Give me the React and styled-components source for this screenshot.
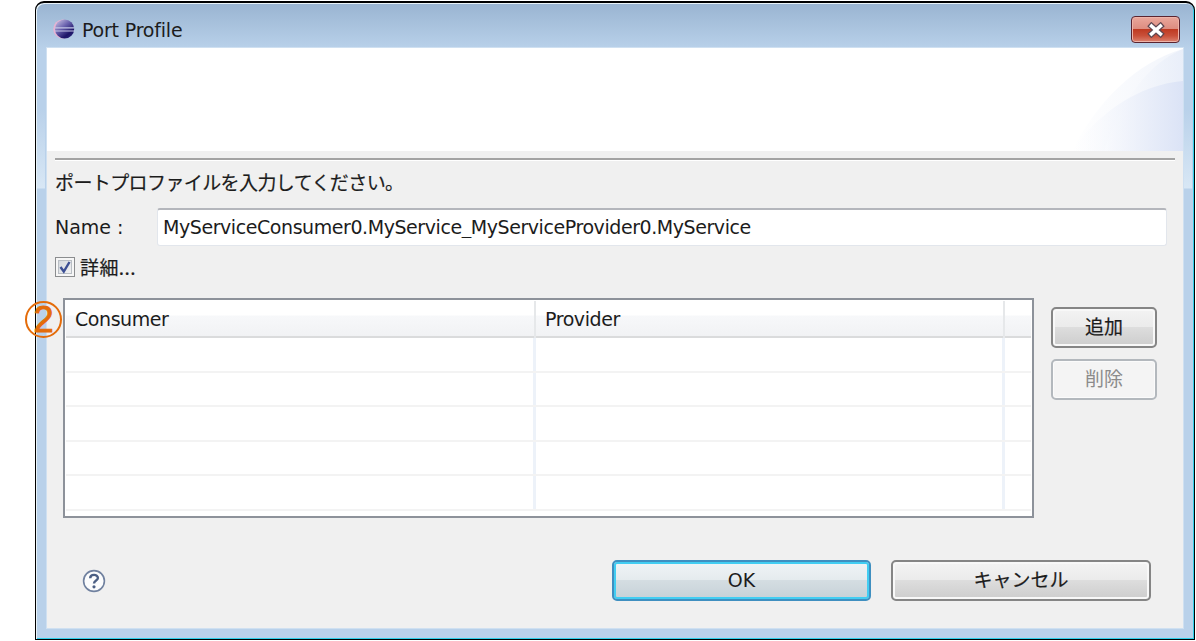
import React from "react";
import styled, { createGlobalStyle } from "styled-components";

const Global = createGlobalStyle`
  * { box-sizing: border-box; }
  html, body { margin: 0; background: #fff; overflow: hidden; }
  body {
    font-family: "DejaVu Sans", "Noto Sans CJK JP", sans-serif;
    font-size: 19px;
    letter-spacing: -0.43px;
    color: #1c1c1c;
  }
`;

const Screen = styled.main`
  position: relative;
  width: 1196px;
  height: 641px;
  padding: 1px 1px 1px 35px;
`;

const Window = styled.section`
  width: 1160px;
  height: 639px;
  padding: 0 11px 11px 11px;
  display: flex;
  flex-direction: column;
  border: 1px solid #000;
  border-top-width: 2px;
  border-radius: 9px 9px 0 0;
  box-shadow: inset 1px 1px 0 #e9f3f8, inset -1px -1px 0 #2fd0ea;
  background:
    linear-gradient(180deg, #b9d1ea 0, #b9d1ea 60px, #d8e7f5 139px, #b9d1ea 140px) 1px 46px / 8px 150px no-repeat,
    linear-gradient(180deg, #b9d1ea 0, #b9d1ea 60px, #d8e7f5 139px, #b9d1ea 140px) right 2px top 46px / 8px 150px no-repeat,
    linear-gradient(180deg, #99b4d1 0, #b9d1ea 46px, #b9d1ea 100%);
`;

const TitleBar = styled.header`
  flex: 0 0 45px;
  padding: 12px 3px 0 6px;
  display: flex;
  align-items: flex-start;
`;

const Logo = styled.svg`
  width: 22px;
  height: 22px;
  margin: 4px 7px 0 0;
`;

const Title = styled.h1`
  margin: 0;
  flex: 1;
  font-size: 19px;
  font-weight: 400;
  line-height: 31px;
  letter-spacing: -0.2px;
`;

const CloseButton = styled.button`
  width: 49px;
  height: 27px;
  margin-top: 1px;
  padding: 0;
  display: grid;
  place-items: center;
  border: 1px solid #5a2430;
  border-radius: 4px;
  box-shadow: inset 0 0 0 1px #eeb4a9;
  background: linear-gradient(180deg, #eaa79c 0, #dd8d80 47%, #bf3a22 50%, #c9503a 75%, #dc8270 100%);
`;

const Body = styled.div`
  flex: 1;
  display: flex;
  flex-direction: column;
  background: #f0f0f0;
  outline: 1px solid #cfe0f1;
`;

const Banner = styled.div`
  flex: 0 0 103px;
  display: flex;
  justify-content: flex-end;
  background: #fff;
  svg { display: block; }
`;

const Rule = styled.hr`
  flex: 0 0 3px;
  margin: 7px 8px 0;
  border: 0;
  border-top: 2px solid #a3a3a3;
  border-bottom: 1px solid #fff;
`;

const Form = styled.div`
  padding: 7px 16px 0 8px;
  display: flex;
  flex-direction: column;
`;

const Message = styled.p`
  margin: 0;
  font-family: "Noto Sans CJK JP", sans-serif;
  font-size: 19px;
  line-height: 28px;
  letter-spacing: ${(p) => p.$spacing || "-0.6px"};
  -webkit-text-stroke: 0.2px #1c1c1c;
`;

const Field = styled.label`
  margin-top: 12px;
  display: flex;
  align-items: center;
`;

const FieldName = styled.span`
  width: 102px;
  line-height: 38px;
  letter-spacing: 0;
`;

const Input = styled.input`
  flex: 1;
  min-width: 0;
  height: 38px;
  padding: 0 5px 2px;
  border: 1px solid #e2e6ec;
  border-top: 2px solid #b4b6bc;
  border-radius: 3px;
  background: #fff;
  color: inherit;
  font: inherit;
  letter-spacing: inherit;
  outline: none;
`;

const Details = styled.div`
  margin-top: 7px;
  display: flex;
  align-items: center;
  gap: 5px;
`;

const CheckBox = styled.span`
  width: 20px;
  height: 20px;
  display: grid;
  place-items: center;
  border: 1px solid #8b8d8f;
  box-shadow: inset 0 0 0 2px #f6f6f6, inset 0 0 0 3px #b9bec4;
  background: linear-gradient(135deg, #cfd4da, #f6f6f6);
`;

const Ports = styled.div`
  margin-top: 17px;
  padding-left: 16px;
  display: flex;
  gap: 17px;
`;

const Table = styled.div`
  width: 971px;
  height: 220px;
  padding: 1px;
  border: 2px solid #8d929a;
  background: #fff;
  overflow: hidden;
`;

const Row = styled.div`
  height: ${(p) => (p.$head ? "37px" : "34.5px")};
  display: grid;
  grid-template-columns: 470px 469px 1fr;
  border-bottom: 2px solid ${(p) => (p.$head ? "#dadbdc" : "#f3f3f3")};
  background: ${(p) => (p.$head ? "linear-gradient(180deg, #fff 0, #fff 14px, #f7f8fa 15px, #f1f2f4 100%)" : "#fff")};
`;

const Cell = styled.div`
  padding-left: 9px;
  line-height: 37px;
  border-right: ${(p) => (p.$head ? "2px solid #e6e8ea" : "3px solid #edf2f9")};
  &:last-child { border-right: 0; }
`;

const SideButtons = styled.div`
  padding-top: 9px;
  display: flex;
  flex-direction: column;
  gap: 11px;
`;

const faces = {
  normal: "linear-gradient(180deg, #f3f3f3 0, #ebebeb 48%, #dddddd 50%, #cdcdcd 100%)",
  primary: "linear-gradient(180deg, #f0f4f6 0, #e5ebee 48%, #d4dde2 50%, #c6d1d7 100%)",
  disabled: "#f4f4f4",
};
const edges = { normal: "#858585", primary: "#3f8fc0", disabled: "#b3b8bd" };
const rims = {
  normal: "inset 0 0 0 2px #f8f8f8",
  primary: "inset 0 0 0 2px #42cdf2",
  disabled: "inset 0 0 0 1px #fbfbfb",
};

const Button = styled.button`
  width: ${(p) => p.$width}px;
  height: 41px;
  padding: 0 0 ${(p) => (p.$kind === "primary" ? "1px" : "4px")};
  border: 2px solid ${(p) => edges[p.$kind]};
  border-radius: 5px;
  box-shadow: ${(p) => rims[p.$kind]};
  background: ${(p) => faces[p.$kind]};
  color: ${(p) => (p.$kind === "disabled" ? "#8b8b8b" : "#1c1c1c")};
  font-family: inherit;
  font-size: 19px;
  letter-spacing: 0;
  -webkit-text-stroke: ${(p) => (p.$kind === "normal" ? "0.2px #1c1c1c" : "0")};
`;

const Footer = styled.footer`
  margin-top: 42px;
  padding: 0 32px 0 35px;
  display: flex;
  align-items: center;
  gap: 20px;
`;

const Help = styled.svg`
  width: 24px;
  height: 24px;
  margin-right: auto;
`;

const Callout = styled.span`
  position: absolute;
  left: 25px;
  top: 301px;
  width: 37px;
  height: 37px;
  border: 2px solid #e46c0a;
  border-radius: 50%;
  color: #e46c0a;
  font: 36px/34px "Liberation Sans", sans-serif;
  letter-spacing: 0;
  -webkit-text-stroke: 1.1px #e46c0a;
  text-align: center;
`;

function EclipseLogo() {
  return (
    <Logo viewBox="0 0 22 22">
      <defs>
        <linearGradient id="ball" x1="0" y1="0" x2="0.8" y2="1">
          <stop offset="0" stopColor="#d6cdea" />
          <stop offset="0.45" stopColor="#6a62ae" />
          <stop offset="0.8" stopColor="#1d1568" />
          <stop offset="1" stopColor="#2a2478" />
        </linearGradient>
      </defs>
      <circle cx="9.8" cy="10" r="9.6" fill="#e6b4d3" />
      <circle cx="11.6" cy="10" r="9.6" fill="url(#ball)" />
      <path d="M2 8.8h19M2 12h19.5" stroke="#c4c6e6" strokeWidth="1.2" />
    </Logo>
  );
}

function BannerArt() {
  return (
    <svg width="125" height="103" viewBox="0 0 125 103">
      <defs>
        <linearGradient id="sweep" x1="0" y1="0" x2="1" y2="0">
          <stop offset="0" stopColor="#fff" />
          <stop offset="1" stopColor="#e6ecf8" />
        </linearGradient>
        <linearGradient id="hill" x1="0" y1="0" x2="1" y2="0">
          <stop offset="0" stopColor="#fff" stopOpacity="0.4" />
          <stop offset="1" stopColor="#dbe3f6" />
        </linearGradient>
      </defs>
      <path d="M14 103C38 55 78 14 125 1V103Z" fill="url(#sweep)" opacity="0.55" />
      <path d="M46 103C62 55 90 15 125 1V103Z" fill="url(#sweep)" opacity="0.75" />
      <path d="M14 103C40 65 80 37 125 33V103Z" fill="url(#hill)" />
    </svg>
  );
}

const ROWS = [1, 2, 3, 4, 5];

export default function App() {
  return (
    <>
      <Global />
      <Screen>
        <Window>
          <TitleBar>
            <EclipseLogo />
            <Title>Port Profile</Title>
            <CloseButton aria-label="Close">
              <svg width="20" height="16" viewBox="0 0 20 16">
                <path d="M5.5 4L14.5 12M14.5 4L5.5 12" stroke="#5d4650" strokeWidth="6" strokeLinecap="square" />
                <path d="M5.5 4L14.5 12M14.5 4L5.5 12" stroke="#fff" strokeWidth="3.5" strokeLinecap="square" />
              </svg>
            </CloseButton>
          </TitleBar>
          <Body>
            <Banner><BannerArt /></Banner>
            <Rule />
            <Form>
              <Message>ポートプロファイルを入力してください。</Message>
              <Field>
                <FieldName>Name :</FieldName>
                <Input readOnly value="MyServiceConsumer0.MyService_MyServiceProvider0.MyService" />
              </Field>
              <Details>
                <CheckBox>
                  <svg width="14" height="14" viewBox="0 0 14 14">
                    <path d="M2.5 7L5.8 11.5L11.5 2" fill="none" stroke="#3c4f94" strokeWidth="2.4" />
                  </svg>
                </CheckBox>
                <Message as="span" $spacing="0.4px">詳細...</Message>
              </Details>
            </Form>
            <Ports>
              <Table>
                <Row $head>
                  <Cell $head>Consumer</Cell>
                  <Cell $head>Provider</Cell>
                  <Cell $head />
                </Row>
                {ROWS.map((n) => (
                  <Row key={n}><Cell /><Cell /><Cell /></Row>
                ))}
              </Table>
              <SideButtons>
                <Button $width={106} $kind="normal">追加</Button>
                <Button $width={106} $kind="disabled" disabled>削除</Button>
              </SideButtons>
            </Ports>
            <Footer>
              <Help viewBox="0 0 24 24">
                <circle cx="12" cy="12" r="10.4" fill="#fbfcfd" stroke="#70819f" strokeWidth="1.6" />
                <path d="M8.2 9.2C8.2 4.8 15.9 4.9 15.9 9C15.9 11.6 12 11.6 12 14.6" fill="none" stroke="#4b5f84" strokeWidth="2.4" />
                <circle cx="12" cy="17.8" r="1.6" fill="#4b5f84" />
              </Help>
              <Button $width={259} $kind="primary">OK</Button>
              <Button $width={260} $kind="normal">キャンセル</Button>
            </Footer>
          </Body>
        </Window>
        <Callout>2</Callout>
      </Screen>
    </>
  );
}
